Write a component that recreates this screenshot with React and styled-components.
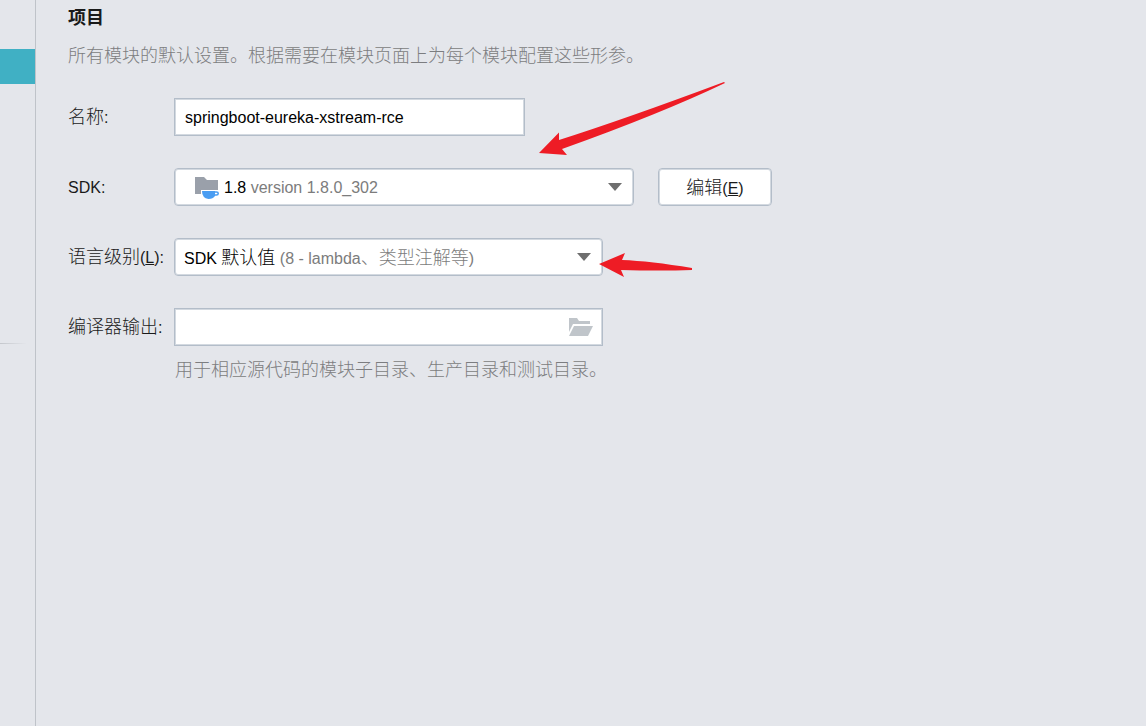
import React from 'react';
import { useState } from 'react';
import styled, { createGlobalStyle } from 'styled-components';

const App = () => {
  const [name, setName] = useState('springboot-eureka-xstream-rce');
  const [output, setOutput] = useState('');

  return (
    <Page>
      <GlobalStyle />
      <Sidebar>
        <ActiveItem href="#project" aria-label="项目" />
        <Divider />
      </Sidebar>
      <Content>
        <Title>项目</Title>
        <Description>所有模块的默认设置。根据需要在模块页面上为每个模块配置这些形参。</Description>

        <Form onSubmit={(e) => e.preventDefault()}>
          <Label htmlFor="name">名称<Latin>:</Latin></Label>
          <TextInput id="name" value={name} onChange={(e) => setName(e.target.value)} />

          <Label htmlFor="sdk"><Latin>SDK:</Latin></Label>
          <Row>
            <SelectBox $width="460px">
              <Select id="sdk">
                <option>1.8 version 1.8.0_302</option>
              </Select>
              <SelectValue $indent="20px" aria-hidden="true">
                <SdkIcon />
                <Latin>1.8 <Muted>version 1.8.0_302</Muted></Latin>
              </SelectValue>
              <Caret />
            </SelectBox>
            <Button type="button">编辑<Latin>(<u>E</u>)</Latin></Button>
          </Row>

          <Label htmlFor="level">语言级别<Latin>(<u>L</u>):</Latin></Label>
          <SelectBox $width="429px">
            <Select id="level">
              <option>SDK 默认值 (8 - lambda、类型注解等)</option>
            </Select>
            <SelectValue $indent="9px" aria-hidden="true">
              <span>
                <Latin>SDK </Latin>默认值<Latin> </Latin>
                <Muted><Latin>(8 - lambda</Latin>、类型注解等<Latin>)</Latin></Muted>
              </span>
            </SelectValue>
            <Caret />
          </SelectBox>

          <Label htmlFor="output">编译器输出<Latin>:</Latin></Label>
          <PathBox>
            <PathInput id="output" value={output} onChange={(e) => setOutput(e.target.value)} />
            <BrowseButton type="button" aria-label="浏览">
              <FolderIcon />
            </BrowseButton>
          </PathBox>
        </Form>
        <Hint>用于相应源代码的模块子目录、生产目录和测试目录。</Hint>
      </Content>

      <Arrows width="800" height="300" viewBox="0 0 800 300" aria-hidden="true">
        <path d="M539 153L559 132.500L559 140Q625 119 724 82L725 83Q660 114 562 149L567 155Z" />
        <path d="M599 264L625 253L622 260Q650 261 692 268V270Q660 271 621 270L624 277Z" />
      </Arrows>
    </Page>
  );
}

const SdkIcon = () => (
  <svg width="24" height="24" viewBox="0 0 24 24">
    <path d="M0 1H9L12 4H23V14H6V18H0Z" fill="#9aa0aa" />
    <path d="M7 15H20V20Q18 23 13.500 23Q7 22 7 15Z" fill="#4a9df2" />
    <path d="M19 16H21.500Q23.200 16 23.200 17.500T21.500 19H19" fill="none" stroke="#4a9df2" strokeWidth="1.600" />
  </svg>
);

const FolderIcon = () => (
  <svg width="24" height="18" viewBox="0 0 24 18">
    <path d="M0 0H8L10 3H21V6H4L0 14Z" fill="#c0c5ca" />
    <path d="M5 8H24L19 18H0Z" fill="#c0c5ca" />
  </svg>
);

const Caret = () => (
  <CaretIcon width="14" height="8" viewBox="0 0 14 8">
    <path d="M0 0H14L7 8Z" fill="#6e6e6e" />
  </CaretIcon>
);

const GlobalStyle = createGlobalStyle`
  * {
    box-sizing: border-box;
  }
  body {
    margin: 0;
    background: #e4e6eb;
    color: #1a1a1a;
    font-family: 'Liberation Sans', 'Noto Sans CJK SC', sans-serif;
    font-size: 18px;
    line-height: 24px;
  }
`;

const Page = styled.div`
  position: relative;
  display: flex;
  min-height: 100vh;
`;

const Sidebar = styled.nav`
  width: 36px;
  flex-shrink: 0;
  padding-top: 49px;
  border-right: 1px solid #bfc3c9;
`;

const ActiveItem = styled.a`
  display: block;
  height: 35px;
  background: #40b0c4;
`;

const Divider = styled.hr`
  height: 1px;
  margin: 259px 8px 0 0;
  border: none;
  background: linear-gradient(to right, #c4c7cc, #e4e6eb);
`;

const Content = styled.main`
  flex: 1;
  padding: 6px 32px;
`;

const Title = styled.h1`
  margin: 0;
  font-size: 18px;
  line-height: 24px;
  font-weight: 700;
`;

const Description = styled.p`
  margin: 14px 0 30px;
  color: #7c7d80;
  font-weight: 300;
`;

const Form = styled.form`
  display: grid;
  grid-template-columns: 106px 1fr;
  row-gap: 32px;
  align-items: center;
`;

const Label = styled.label`
  font-weight: 300;
  white-space: nowrap;
`;

const Latin = styled.span`
  font-size: 16px;
  font-weight: 400;
  white-space: pre;
`;

const Muted = styled.span`
  color: #7c7c7c;
`;

const Row = styled.div`
  display: flex;
  gap: 24px;
`;

const TextInput = styled.input`
  width: 351px;
  height: 38px;
  padding: 2px 10px 0;
  border: 1px solid #b3bdc9;
  box-shadow: inset 0 0 0 1px #d3d9e0;
  background: #fff;
  color: #000;
  font-family: inherit;
  font-size: 16px;
  outline: none;
`;

const SelectBox = styled.div`
  position: relative;
  display: flex;
  align-items: center;
  width: ${(props) => props.$width};
  height: 38px;
  border: 1px solid #b3bdc9;
  border-radius: 4px;
  box-shadow: inset 0 0 0 1px #d3d9e0;
  background: #fff;
`;

// the native control sits under the two-tone value
const Select = styled.select`
  position: absolute;
  inset: 0;
  width: 100%;
  border: none;
  background: transparent;
  color: transparent;
  font-family: inherit;
  font-size: 16px;
  appearance: none;
  outline: none;

  option {
    color: #1a1a1a;
  }
`;

const SelectValue = styled.div`
  display: flex;
  flex: 1;
  align-items: center;
  gap: 5px;
  padding-top: 2px;
  padding-left: ${(props) => props.$indent};
  color: #000;
  font-weight: 300;
  pointer-events: none;
`;

const CaretIcon = styled.svg`
  margin-right: 11px;
  pointer-events: none;
`;

const Button = styled.button`
  width: 114px;
  height: 38px;
  padding: 0 0 2px;
  border: 1px solid #b3bdc9;
  border-radius: 4px;
  box-shadow: inset 0 0 0 1px #d3d9e0;
  background: #fff;
  color: #1a1a1a;
  font-family: inherit;
  font-size: 18px;
  font-weight: 300;
`;

const PathBox = styled.div`
  display: flex;
  align-items: center;
  width: 429px;
  height: 38px;
  border: 1px solid #b3bdc9;
  box-shadow: inset 0 0 0 1px #d3d9e0;
  background: #fff;
`;

const PathInput = styled.input`
  flex: 1;
  min-width: 0;
  padding: 0 10px;
  border: none;
  background: transparent;
  font-family: inherit;
  font-size: 16px;
  outline: none;
`;

const BrowseButton = styled.button`
  display: flex;
  margin-right: 9px;
  padding: 0;
  border: none;
  background: none;
`;

const Hint = styled.p`
  margin: 12px 0 0 107px;
  color: #7c7d80;
  font-weight: 300;
`;

const Arrows = styled.svg`
  position: absolute;
  top: 0;
  left: 0;
  fill: #ee1c25;
  pointer-events: none;
`;

export default App;
